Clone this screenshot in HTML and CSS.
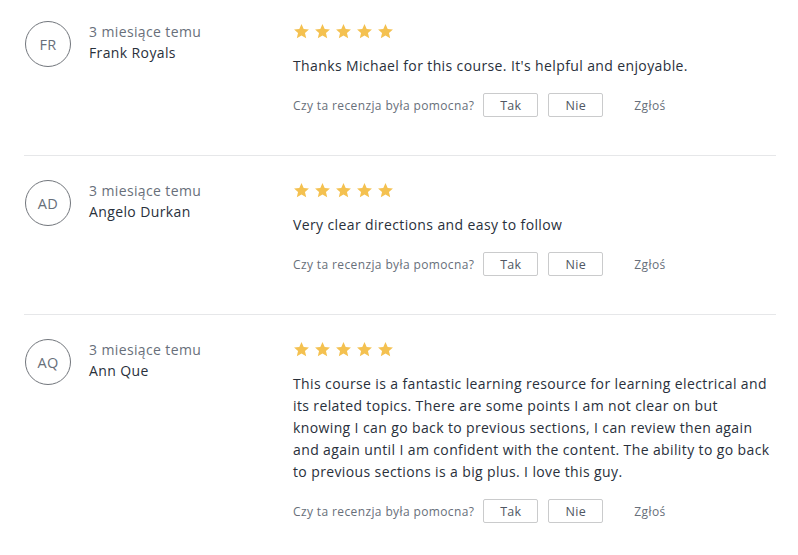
FILE: index.html
```html
<!DOCTYPE html>
<html lang="pl">
<head>
<meta charset="utf-8">
<link rel="stylesheet" href="styles.css">
</head>
<body>
<div class="reviews">
  <div class="review">
    <div class="author">
      <div class="avatar">FR</div>
      <div class="meta">
        <div class="date">3 miesiące temu</div>
        <div class="name">Frank Royals</div>
      </div>
    </div>
    <div class="body">
      <div class="stars">
        <svg viewBox="0 0 24 24"><path d="M12 1.5l3.1 6.9 7.4.7-5.6 5 1.7 7.4L12 17.6l-6.6 3.9 1.7-7.4-5.6-5 7.4-.7z"/></svg>
        <svg viewBox="0 0 24 24"><path d="M12 1.5l3.1 6.9 7.4.7-5.6 5 1.7 7.4L12 17.6l-6.6 3.9 1.7-7.4-5.6-5 7.4-.7z"/></svg>
        <svg viewBox="0 0 24 24"><path d="M12 1.5l3.1 6.9 7.4.7-5.6 5 1.7 7.4L12 17.6l-6.6 3.9 1.7-7.4-5.6-5 7.4-.7z"/></svg>
        <svg viewBox="0 0 24 24"><path d="M12 1.5l3.1 6.9 7.4.7-5.6 5 1.7 7.4L12 17.6l-6.6 3.9 1.7-7.4-5.6-5 7.4-.7z"/></svg>
        <svg viewBox="0 0 24 24"><path d="M12 1.5l3.1 6.9 7.4.7-5.6 5 1.7 7.4L12 17.6l-6.6 3.9 1.7-7.4-5.6-5 7.4-.7z"/></svg>
      </div>
      <p class="text">Thanks Michael for this course. It's helpful and enjoyable.</p>
      <div class="helpful">
        <span class="question">Czy ta recenzja była pomocna?</span>
        <button class="btn">Tak</button>
        <button class="btn">Nie</button>
        <span class="report">Zgłoś</span>
      </div>
    </div>
  </div>

  <div class="review">
    <div class="author">
      <div class="avatar">AD</div>
      <div class="meta">
        <div class="date">3 miesiące temu</div>
        <div class="name">Angelo Durkan</div>
      </div>
    </div>
    <div class="body">
      <div class="stars">
        <svg viewBox="0 0 24 24"><path d="M12 1.5l3.1 6.9 7.4.7-5.6 5 1.7 7.4L12 17.6l-6.6 3.9 1.7-7.4-5.6-5 7.4-.7z"/></svg>
        <svg viewBox="0 0 24 24"><path d="M12 1.5l3.1 6.9 7.4.7-5.6 5 1.7 7.4L12 17.6l-6.6 3.9 1.7-7.4-5.6-5 7.4-.7z"/></svg>
        <svg viewBox="0 0 24 24"><path d="M12 1.5l3.1 6.9 7.4.7-5.6 5 1.7 7.4L12 17.6l-6.6 3.9 1.7-7.4-5.6-5 7.4-.7z"/></svg>
        <svg viewBox="0 0 24 24"><path d="M12 1.5l3.1 6.9 7.4.7-5.6 5 1.7 7.4L12 17.6l-6.6 3.9 1.7-7.4-5.6-5 7.4-.7z"/></svg>
        <svg viewBox="0 0 24 24"><path d="M12 1.5l3.1 6.9 7.4.7-5.6 5 1.7 7.4L12 17.6l-6.6 3.9 1.7-7.4-5.6-5 7.4-.7z"/></svg>
      </div>
      <p class="text">Very clear directions and easy to follow</p>
      <div class="helpful">
        <span class="question">Czy ta recenzja była pomocna?</span>
        <button class="btn">Tak</button>
        <button class="btn">Nie</button>
        <span class="report">Zgłoś</span>
      </div>
    </div>
  </div>

  <div class="review">
    <div class="author">
      <div class="avatar">AQ</div>
      <div class="meta">
        <div class="date">3 miesiące temu</div>
        <div class="name">Ann Que</div>
      </div>
    </div>
    <div class="body">
      <div class="stars">
        <svg viewBox="0 0 24 24"><path d="M12 1.5l3.1 6.9 7.4.7-5.6 5 1.7 7.4L12 17.6l-6.6 3.9 1.7-7.4-5.6-5 7.4-.7z"/></svg>
        <svg viewBox="0 0 24 24"><path d="M12 1.5l3.1 6.9 7.4.7-5.6 5 1.7 7.4L12 17.6l-6.6 3.9 1.7-7.4-5.6-5 7.4-.7z"/></svg>
        <svg viewBox="0 0 24 24"><path d="M12 1.5l3.1 6.9 7.4.7-5.6 5 1.7 7.4L12 17.6l-6.6 3.9 1.7-7.4-5.6-5 7.4-.7z"/></svg>
        <svg viewBox="0 0 24 24"><path d="M12 1.5l3.1 6.9 7.4.7-5.6 5 1.7 7.4L12 17.6l-6.6 3.9 1.7-7.4-5.6-5 7.4-.7z"/></svg>
        <svg viewBox="0 0 24 24"><path d="M12 1.5l3.1 6.9 7.4.7-5.6 5 1.7 7.4L12 17.6l-6.6 3.9 1.7-7.4-5.6-5 7.4-.7z"/></svg>
      </div>
      <p class="text">This course is a fantastic learning resource for learning electrical and its related topics. There are some points I am not clear on but knowing I can go back to previous sections, I can review then again and again until I am confident with the content. The ability to go back to previous sections is a big plus. I love this guy.</p>
      <div class="helpful">
        <span class="question">Czy ta recenzja była pomocna?</span>
        <button class="btn">Tak</button>
        <button class="btn">Nie</button>
        <span class="report">Zgłoś</span>
      </div>
    </div>
  </div>
</div>
</body>
</html>
```
FILE: styles.css
```css
* { box-sizing: border-box; }
html, body { margin: 0; padding: 0; background: #fff; }
body {
  font-family: "Open Sans", "Noto Sans", sans-serif;
  color: #29303b;
  font-size: 14px;
  letter-spacing: 0.38px;
}
.reviews {
  width: 752px;
  margin-left: 24px;
}
.review {
  display: flex;
  padding: 24px 0 38px;
  border-bottom: 1px solid #e6e7e9;
}
.review:first-child { padding-top: 21px; }
.review:last-child { border-bottom: none; }
.author {
  width: 269px;
  flex: none;
  display: flex;
  gap: 18px;
}
.avatar {
  width: 46px;
  height: 46px;
  border: 1px solid #72767c;
  border-radius: 50%;
  display: flex;
  align-items: center;
  justify-content: center;
  font-size: 14.5px;
  color: #686f7a;
  margin-left: 1px;
}
.meta { line-height: 21px; }
.date { color: #686f7a; }
.name { color: #29303b; }
.body { flex: 1; min-width: 0; }
.stars {
  height: 21px;
  display: flex;
  align-items: center;
  gap: 4px;
}
.stars svg {
  width: 17px;
  height: 17px;
  fill: #f4c150;
}
.text {
  margin: 13px 0 0;
  line-height: 22px;
  color: #29303b;
}
.helpful {
  margin-top: 16px;
  display: flex;
  align-items: center;
  font-size: 12px;
  color: #686f7a;
}
.question { margin-right: 9px; }
.btn {
  font-family: inherit;
  font-size: 12.5px;
  letter-spacing: 0.3px;
  color: #505763;
  background: #fff;
  border: 1px solid #cacbcc;
  border-radius: 2px;
  width: 55px;
  height: 24px;
  padding: 0;
  margin-right: 10px;
}
.report { margin-left: 21px; color: #686f7a; }
```
